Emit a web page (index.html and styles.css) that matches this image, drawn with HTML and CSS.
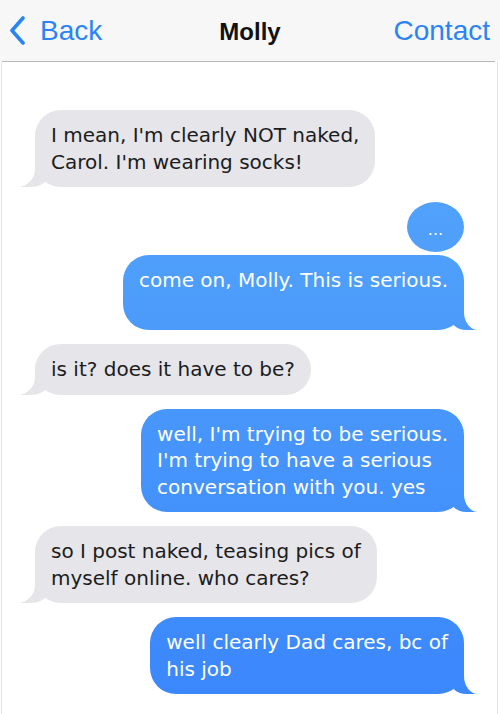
FILE: index.html
```html
<!DOCTYPE html>
<html>
<head>
<meta charset="utf-8">
<link rel="stylesheet" href="styles.css">
</head>
<body>
<div class="phone">
  <header class="nav">
    <div class="nav-left">
      <svg class="chev" width="16" height="30" viewBox="0 0 16 30"><polyline points="13,2 2,14.5 13,27" fill="none" stroke="#2a84f6" stroke-width="3.6" stroke-linecap="round" stroke-linejoin="round"/></svg>
      <span class="nav-link">Back</span>
    </div>
    <div class="nav-title">Molly</div>
    <div class="nav-right"><span class="nav-link">Contact</span></div>
  </header>
  <div class="rule"></div>
  <main class="chat">
    <div class="msg them">I mean, I'm clearly NOT naked,<br>Carol. I'm wearing socks!</div>
    <div class="typing">...</div>
    <div class="msg me tight">come on, Molly. This is serious.<br>&nbsp;</div>
    <div class="msg them">is it? does it have to be?</div>
    <div class="msg me">well, I'm trying to be serious.<br>I'm trying to have a serious<br>conversation with you. yes</div>
    <div class="msg them">so I post naked, teasing pics of<br>myself online. who cares?</div>
    <div class="msg me">well clearly Dad cares, bc of<br>his job</div>
  </main>
</div>
</body>
</html>
```

FILE: styles.css
```css
html, body {
  margin: 0;
  padding: 0;
  background: #fff;
}
.phone {
  width: 500px;
  height: 714px;
  display: flex;
  flex-direction: column;
  overflow: hidden;
}
.nav {
  height: 61px;
  background: #f7f7f7;
  display: grid;
  grid-template-columns: 1fr auto 1fr;
  align-items: center;
  font-family: "Liberation Sans", Arial, sans-serif;
}
.nav-left {
  display: flex;
  align-items: center;
  gap: 14px;
  padding-left: 10px;
}
.chev {
  display: block;
  margin-top: 1px;
}
.nav-link {
  color: #2a84f6;
  font-size: 28px;
}
.nav-title {
  font-weight: bold;
  font-size: 24px;
  color: #111;
  padding-top: 2px;
}
.nav-right {
  display: flex;
  justify-content: flex-end;
  padding-right: 10px;
}
.rule {
  height: 1px;
  background: #b8b8b8;
  margin: 0 5px 0 2px;
}
.chat {
  flex: 1;
  margin: 0 2px 0 1px;
  border-left: 1px solid #e2e2e2;
  border-right: 1px solid #e2e2e2;
  padding: 48px 33px 0 33px;
  display: flex;
  flex-direction: column;
  align-items: flex-start;
  gap: 14px;
  font-family: "DejaVu Sans", Verdana, sans-serif;
  font-size: 20px;
  line-height: 26.5px;
}
.msg {
  position: relative;
  padding: 12px 16px;
  border-radius: 26px;
  white-space: nowrap;
}
.them {
  background: #e5e5ea;
  color: #1c1c1c;
}
.me {
  align-self: flex-end;
  color: #fff;
  background: linear-gradient(#58adfb 0px, #4f9ffb 250px, #3a86fc 714px) fixed;
}
.them::before,
.them::after,
.me::before,
.me::after {
  content: "";
  position: absolute;
  bottom: 0;
  height: 28px;
}
.them::before {
  left: -18px;
  width: 32px;
  background: #e5e5ea;
  border-bottom-right-radius: 18px 14px;
}
.them::after {
  left: -30px;
  width: 30px;
  background: #fff;
  border-bottom-right-radius: 18px 18px;
}
.me::before {
  right: -14px;
  width: 28px;
  background: linear-gradient(#58adfb 0px, #4f9ffb 250px, #3a86fc 714px) fixed;
  border-bottom-left-radius: 16px 14px;
}
.me::after {
  right: -28px;
  width: 28px;
  background: #fff;
  border-bottom-left-radius: 14px 18px;
}
.typing {
  align-self: flex-end;
  width: 57px;
  height: 50px;
  border-radius: 50%;
  background: linear-gradient(#58adfb 0px, #4f9ffb 250px, #3a86fc 714px) fixed;
  color: #fff;
  font-size: 16px;
  line-height: 16px;
  display: flex;
  justify-content: center;
  align-items: flex-end;
  padding-bottom: 14px;
  box-sizing: border-box;
  margin-top: 1px;
  margin-bottom: -11px;
}
.tight {
  padding-top: 12px;
  padding-bottom: 10px;
}
```
